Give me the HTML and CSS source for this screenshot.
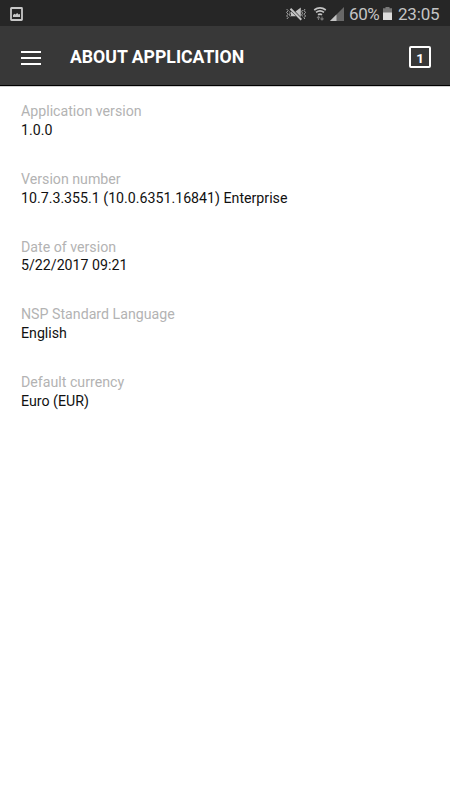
FILE: index.html
```html
<!DOCTYPE html>
<html lang="en">
<head>
<meta charset="utf-8">
<title>About application</title>
<link rel="stylesheet" href="styles.css">
</head>
<body>
<div class="status">
  <svg class="picture" width="13" height="14" viewBox="0 0 13 14"><rect x="1" y="1" width="11" height="12" rx=".5" fill="none" stroke="#c8c8c8" stroke-width="1.800"/><path d="M3 10V8l1.500-1.200 1 .8L7.200 6l1.300 1.500L10 7v3z" fill="#c8c8c8"/></svg>
  <div class="indicators">
    <svg class="mute" width="20" height="14" viewBox="0 0 20 14"><path d="M5 4.500 10 9.300H5zM9.500 4.500 14.800.5V10z" fill="#c4c4c4"/><path d="M4.500 1.800 15.300 12.800" stroke="#c4c4c4" stroke-width="2"/><path d="M.6 2l1.600 1.700L.6 5.400l1.600 1.800L.6 9l1.600 1.600L.8 12M3.500 4.500l.8 1.400-.8 1.800.8 1.800M16.500 3l-.8 1.600.8 1.600-.8 1.600.8 1.600M19 2l-1 1.700 1.600 1.700L18 7.200 19.600 9 18 10.600l.8 1.400" fill="none" stroke="#b4b4b4" stroke-width=".9"/></svg>
    <svg class="wifi" width="14" height="14" viewBox="0 0 14 14"><path d="M1.200 3q5.800-4.200 11.600 0M3 5.400q4-3 8 0M5 7.800q2-1.500 4 0" fill="none" stroke="#c4c4c4" stroke-width="1.700"/><path d="M5.500 9.500V13M4 11 5.500 9.500 7 11M9 9.500V13M7.500 11.500 9 13l1.500-1.500" fill="none" stroke="#777" stroke-width="1.100"/></svg>
    <svg class="signal" width="14" height="14" viewBox="0 0 14 14"><path d="M0 14 14 0v14z" fill="#686868"/><path d="M0 14 6.500 7.500V14z" fill="#c4c4c4"/></svg>
    <span class="percent">60%</span>
    <svg class="battery" width="9" height="13" viewBox="0 0 9 13"><path d="M2.500 0h4v1.300H9V6H0V1.300h2.500z" fill="#777"/><path d="M0 5.500h9V13H0z" fill="#ddd"/></svg>
    <span class="clock">23:05</span>
  </div>
</div>
<header class="bar">
  <svg class="menu" width="20" height="14" viewBox="0 0 20 14"><path d="M0 1h20M0 7h20M0 13h20" stroke="#fff" stroke-width="2.200"/></svg>
  <h1 class="title">ABOUT APPLICATION</h1>
  <div class="count">1</div>
</header>
<main class="details">
  <div class="item"><div class="label">Application version</div><div class="value">1.0.0</div></div>
  <div class="item"><div class="label">Version number</div><div class="value">10.7.3.355.1 (10.0.6351.16841) Enterprise</div></div>
  <div class="item"><div class="label">Date of version</div><div class="value">5/22/2017 09:21</div></div>
  <div class="item"><div class="label">NSP Standard Language</div><div class="value">English</div></div>
  <div class="item"><div class="label">Default currency</div><div class="value">Euro (EUR)</div></div>
</main>
</body>
</html>
```
FILE: styles.css
```css
* { box-sizing: border-box; }
body { margin: 0; height: 800px; background: #fff; font-family: Roboto, sans-serif; overflow: hidden; }
svg { display: block; flex: none; }
.status { height: 26px; background: #262626; display: flex; align-items: center; justify-content: space-between; padding: 1px 11px 0 10px; color: #c4c4c4; font-size: 17px; line-height: 26px; }
.indicators { display: flex; align-items: center; }
.wifi { margin-left: 7px; }
.signal { margin-left: 3px; }
.percent { margin-left: 5px; width: 31px; letter-spacing: -.4px; }
.battery { margin-left: 3px; }
.clock { margin-left: 6px; width: 41px; letter-spacing: -.2px; }
.bar { height: 60px; background: #383838; border-bottom: 1px solid #000; display: flex; align-items: center; padding: 3px 19px 0 21px; color: #fff; }
.menu { margin: 2px 29px 0 0; }
.title { margin: 0; font-size: 17.65px; line-height: 22px; font-weight: 700; flex: 1; }
.count { width: 22px; height: 22px; border: 2px solid #fff; border-radius: 2px; font-size: 13.5px; font-weight: 700; line-height: 20px; text-align: center; }
.details { border-top: 1px solid #d0d0d0; padding: 15px 21px; font-size: 14.2px; line-height: 18.8px; }
.item { height: 67.8px; }
.label { color: #b3b3b3; }
.value { color: #111; }
```
